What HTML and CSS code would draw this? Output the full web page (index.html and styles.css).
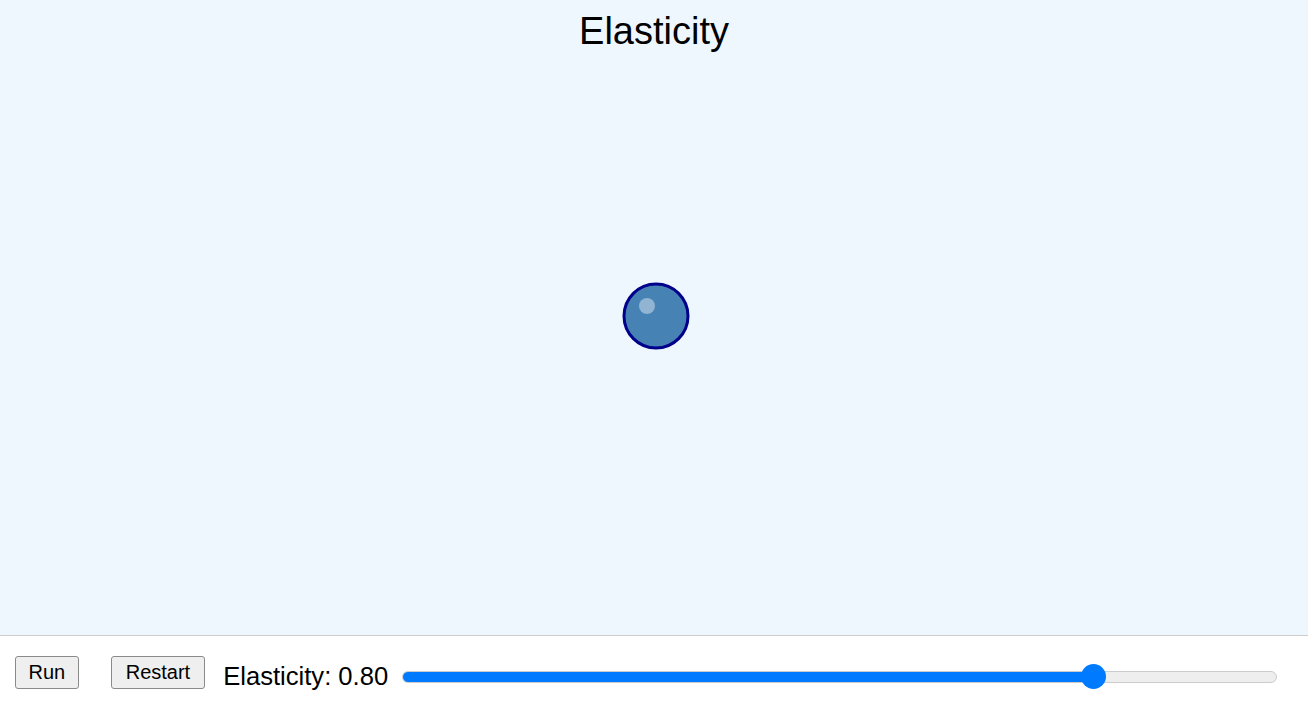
FILE: index.html
```html
<!DOCTYPE html>
<html>
<head>
<meta charset="utf-8">
<link rel="stylesheet" href="styles.css">
</head>
<body>
<div class="stage">
  <h1 class="title">Elasticity</h1>
  <svg class="ball" width="72" height="72" viewBox="0 0 72 72">
    <circle cx="36" cy="36" r="32" fill="#4682b4" stroke="#00008b" stroke-width="3"/>
    <circle cx="27" cy="26" r="8" fill="#ffffff" fill-opacity="0.4"/>
  </svg>
</div>
<div class="controls">
  <button class="btn btn-run">Run</button>
  <button class="btn btn-restart">Restart</button>
  <span class="label">Elasticity: 0.80</span>
  <input class="slider" type="range" min="0" max="1" step="0.01" value="0.8" style="background: linear-gradient(to right, #007bff 0%, #007bff 80%, #eeeeee 80%, #eeeeee 100%);">
</div>
</body>
</html>
```
FILE: styles.css
```css
html, body {
  margin: 0;
  padding: 0;
  background: #ffffff;
  font-family: "Liberation Sans", Arial, sans-serif;
}
.stage {
  position: relative;
  height: 635px;
  background: #eff7fe;
  border-bottom: 1px solid #cccccc;
  overflow: hidden;
}
.title {
  margin: 0;
  padding-top: 12px;
  font-size: 38px;
  font-weight: normal;
  line-height: 1;
  text-align: center;
  color: #000;
}
.ball {
  position: absolute;
  left: 620px;
  top: 280px;
}
.controls {
  display: flex;
  align-items: center;
  box-sizing: border-box;
  height: 76px;
  padding: 5px 31px 0 15px;
}
.btn {
  font-family: "Liberation Sans", Arial, sans-serif;
  font-size: 20px;
  height: 33px;
  padding: 0 12.5px;
  background: #efefef;
  border: 1px solid #8a8a8a;
  border-radius: 3px;
  color: #000;
  margin-bottom: 9px;
}
.btn-run {
  margin-right: 32px;
}
.btn-restart {
  padding: 0 14px;
  margin-right: 18px;
}
.label {
  font-size: 25.6px;
  color: #000;
  margin-right: 14px;
  white-space: nowrap;
}
.slider {
  -webkit-appearance: none;
  appearance: none;
  flex: 1;
  margin: 0;
  height: 12px;
  border-radius: 6px;
  border: 1px solid #cccccc;
  outline: none;
  box-sizing: border-box;
}
.slider::-webkit-slider-thumb {
  -webkit-appearance: none;
  appearance: none;
  width: 25px;
  height: 25px;
  border-radius: 50%;
  background: #007bff;
  border: none;
}
```
